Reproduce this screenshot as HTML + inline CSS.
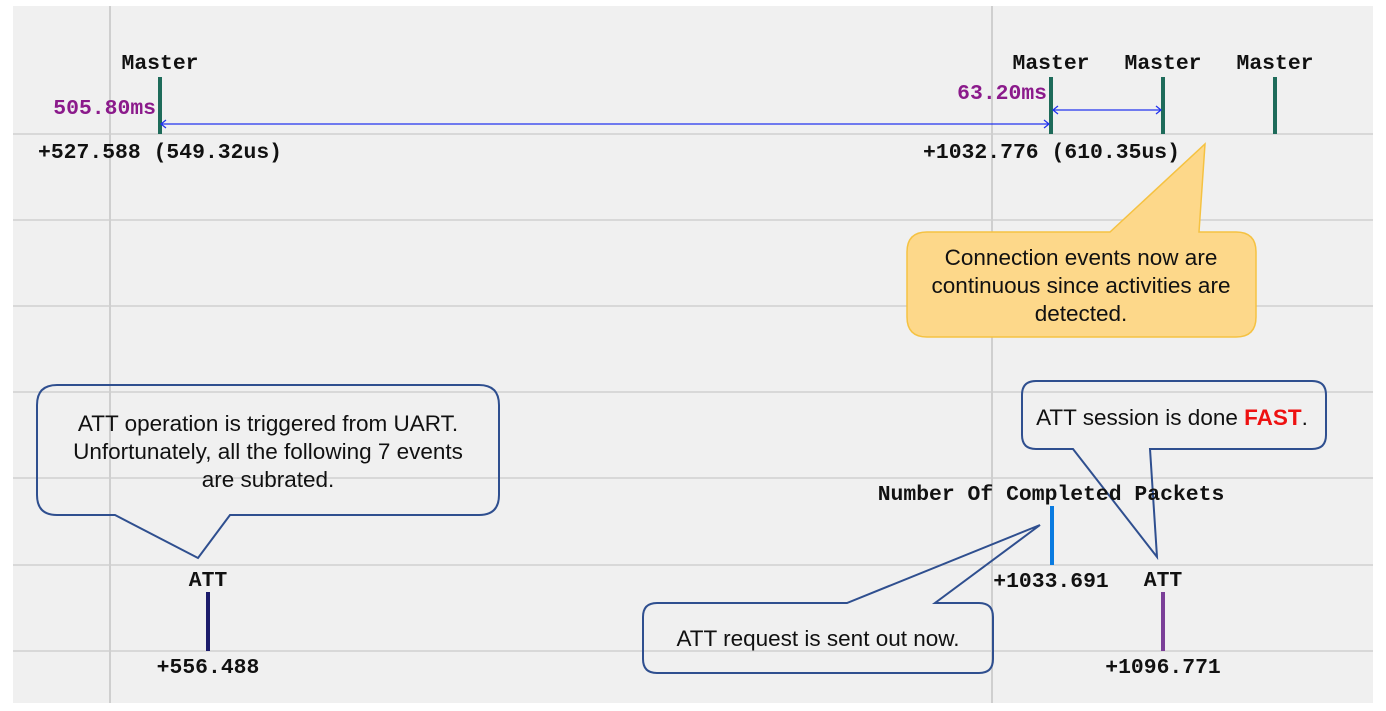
<!DOCTYPE html>
<html><head><meta charset="utf-8"><style>
html,body{margin:0;padding:0;background:#fff;}
svg{display:block;}
.m{font-family:"Liberation Mono",monospace;font-size:21.4px;font-weight:bold;fill:#111;}
.s{font-family:"Liberation Sans",sans-serif;font-size:22.5px;fill:#111;}
</style></head><body>
<svg width="1386" height="711" viewBox="0 0 1386 711" xmlns="http://www.w3.org/2000/svg">
<rect x="13" y="6" width="1360" height="697" fill="#f0f0f0"/>
<g stroke="#cfcfcf" stroke-width="1.5">
<line x1="13" y1="134" x2="1373" y2="134"/><line x1="13" y1="220" x2="1373" y2="220"/>
<line x1="13" y1="306" x2="1373" y2="306"/><line x1="13" y1="392" x2="1373" y2="392"/>
<line x1="13" y1="478" x2="1373" y2="478"/><line x1="13" y1="565" x2="1373" y2="565"/>
<line x1="13" y1="651" x2="1373" y2="651"/>
<line x1="110" y1="6" x2="110" y2="703" stroke-width="2"/><line x1="992" y1="6" x2="992" y2="703" stroke-width="2"/>
</g>
<g fill="#1e6b5a"><rect x="158" y="77" width="4" height="57"/><rect x="1049" y="77" width="4" height="57"/><rect x="1161" y="77" width="4" height="57"/><rect x="1273" y="77" width="4" height="57"/></g>
<g stroke="#2233ee" stroke-width="1.3" fill="none">
<line x1="161" y1="124" x2="1049" y2="124"/><polyline points="166,120 161,124 166,128"/><polyline points="1044,120 1049,124 1044,128"/>
<line x1="1053" y1="110" x2="1161" y2="110"/><polyline points="1058,106 1053,110 1058,114"/><polyline points="1156,106 1161,110 1156,114"/>
</g>
<rect x="1050" y="506" width="4" height="59" fill="#0a7be0"/>
<rect x="1161" y="592" width="4" height="59" fill="#7b3f98"/>
<rect x="206" y="592" width="4" height="59" fill="#1c1c6b"/>
<path d="M927,232 H1110 L1205,144 L1199,232 H1236 Q1256,232 1256,252 V317 Q1256,337 1236,337 H927 Q907,337 907,317 V252 Q907,232 927,232 Z" fill="#fdd88a" stroke="#f5c242" stroke-width="1.5"/>
<g fill="none" stroke="#2f4f8f" stroke-width="2">
<path d="M57,385 H479 Q499,385 499,405 V495 Q499,515 479,515 H230 L198,558 L115,515 H57 Q37,515 37,495 V405 Q37,385 57,385 Z"/>
<path d="M1036,381 H1312 Q1326,381 1326,395 V435 Q1326,449 1312,449 H1150 L1157,557 L1073,449 H1036 Q1022,449 1022,435 V395 Q1022,381 1036,381 Z"/>
<path d="M657,603 H847 L1040,525 L935,603 H979 Q993,603 993,617 V659 Q993,673 979,673 H657 Q643,673 643,659 V617 Q643,603 657,603 Z"/>
</g>
<g class="m" text-anchor="middle">
<text x="160" y="69">Master</text><text x="1051" y="69">Master</text><text x="1163" y="69">Master</text><text x="1275" y="69">Master</text>
<text x="1051" y="500">Number Of Completed Packets</text>
<text x="1051" y="587">+1033.691</text><text x="1163" y="586">ATT</text><text x="1163" y="673">+1096.771</text>
<text x="208" y="586">ATT</text><text x="208" y="673">+556.488</text>
</g>
<text class="m" x="156" y="114" text-anchor="end" style="fill:#8b1a8b">505.80ms</text>
<text class="m" x="1047" y="99" text-anchor="end" style="fill:#8b1a8b">63.20ms</text>
<text class="m" x="38" y="158" textLength="244">+527.588 (549.32us)</text>
<text class="m" x="923" y="158" textLength="257">+1032.776 (610.35us)</text>
<g class="s" text-anchor="middle">
<text x="1081" y="265">Connection events now are</text><text x="1081" y="293">continuous since activities are</text><text x="1081" y="321">detected.</text>
<text x="268" y="431">ATT operation is triggered from UART.</text><text x="268" y="459">Unfortunately, all the following 7 events</text><text x="268" y="487">are subrated.</text>
<text x="1172" y="425">ATT session is done <tspan style="fill:#ee1111;font-weight:bold">FAST</tspan>.</text>
<text x="818" y="646">ATT request is sent out now.</text>
</g>
</svg>
</body></html>
